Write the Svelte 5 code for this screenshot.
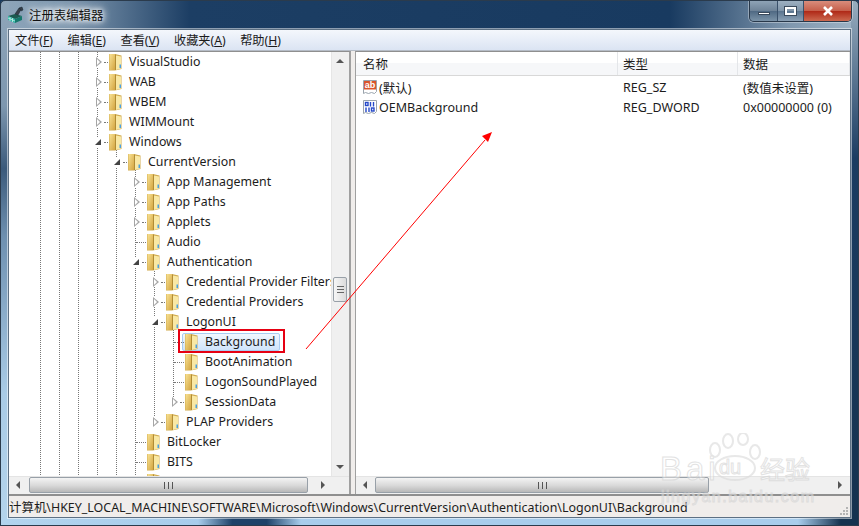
<script>
	const rows = [
		{ d: 4, t: 'VisualStudio', e: 'c' },
		{ d: 4, t: 'WAB', e: 'c' },
		{ d: 4, t: 'WBEM', e: 'c' },
		{ d: 4, t: 'WIMMount', e: 'c' },
		{ d: 4, t: 'Windows', e: 'o' },
		{ d: 5, t: 'CurrentVersion', e: 'o' },
		{ d: 6, t: 'App Management', e: 'c' },
		{ d: 6, t: 'App Paths', e: 'c' },
		{ d: 6, t: 'Applets', e: 'c' },
		{ d: 6, t: 'Audio', e: '' },
		{ d: 6, t: 'Authentication', e: 'o' },
		{ d: 7, t: 'Credential Provider Filters', e: 'c' },
		{ d: 7, t: 'Credential Providers', e: 'c' },
		{ d: 7, t: 'LogonUI', e: 'o' },
		{ d: 8, t: 'Background', e: '', sel: true },
		{ d: 8, t: 'BootAnimation', e: '' },
		{ d: 8, t: 'LogonSoundPlayed', e: '' },
		{ d: 8, t: 'SessionData', e: 'c' },
		{ d: 7, t: 'PLAP Providers', e: 'c' },
		{ d: 6, t: 'BitLocker', e: '' },
		{ d: 6, t: 'BITS', e: '' },
		{ d: 6, t: 'BrowserEmulation', e: 'c' }
	];
	// linhas pontilhadas da arvore: x relativo ao painel, de/ate em px
	const guides = [
		{ x: 31, top: 0, h: 425 },
		{ x: 50, top: 0, h: 425 },
		{ x: 69, top: 0, h: 425 },
		{ x: 88, top: 0, h: 425 },
		{ x: 107, top: 97, h: 328 },
		{ x: 126, top: 117, h: 308 },
		{ x: 145, top: 217, h: 153 },
		{ x: 164, top: 277, h: 74 }
	];
</script>

<svg class="defs" width="0" height="0" aria-hidden="true">
	<defs>
		<linearGradient id="fb" x1="0" x2="1" y1="0" y2="1">
			<stop offset="0" stop-color="#f8e294" />
			<stop offset="1" stop-color="#d4a540" />
		</linearGradient>
		<symbol id="fld" viewBox="0 0 13 18">
			<path d="M0 1h6l6.500 1.500V16L6 17.500H0z" fill="#d2ac50" />
			<path d="M0.500 1h5.500v16H0.500z" fill="url(#fb)" />
			<path d="M7 2.500l5 1v12l-5 1.500z" fill="#f9e8a4" />
			<path d="M6.500 1.500v15.500" stroke="#a8842f" stroke-width=".8" />
			<path d="M10.500 11.500h1.500v3.500h-1.500z" fill="#4aa0e0" />
		</symbol>
	</defs>
</svg>

<div class="window">
	<header class="titlebar">
		<svg class="appicon" width="16" height="18" viewBox="0 0 16 18">
			<path d="M0 10l7-2 7 2-7 3z" fill="#1b5a50" />
			<path d="M0 10l7 3v4l-7-3z" fill="#2fb7a6" />
			<path d="M7 13l7-3v4l-7 3z" fill="#15786c" />
			<path d="M2 11l0 4M4.500 12v4M0 12l7 3" stroke="#d8f4ee" stroke-width=".7" fill="none" />
			<path d="M7 8l4-6 2 1.500-3 5.500zM11 2l3-1 1 3-2 1" fill="#39404a" stroke="#12202a" stroke-width=".5" />
		</svg>
		<span class="title">注册表编辑器</span>
		<div class="caption">
			<button class="cbtn min" aria-label="最小化"><i></i></button>
			<button class="cbtn max" aria-label="最大化"><i></i></button>
			<button class="cbtn close" aria-label="关闭">
				<svg width="12" height="10" viewBox="0 0 12 10"><path d="M2 1l8 8M10 1l-8 8" stroke="#fff" stroke-width="2.600" /></svg>
			</button>
		</div>
	</header>

	<div class="client">
		<nav class="menu">
			<span>文件(<u>F</u>)</span>
			<span>编辑(<u>E</u>)</span>
			<span>查看(<u>V</u>)</span>
			<span>收藏夹(<u>A</u>)</span>
			<span>帮助(<u>H</u>)</span>
		</nav>

		<div class="panes">
			<section class="tree">
				<div class="treeview">
					{#each guides as g}
						<i class="guide" style="left:{g.x}px;top:{g.top}px;height:{g.h}px"></i>
					{/each}
					{#each rows as r}
						<div class="row" class:leaf={!r.e} class:selrow={r.sel} style="padding-left:{r.d * 19 + 8}px">
							<span class="exp {r.e}"></span>
							<i class="dots"></i>
							<svg class="folder" width="13" height="18"><use href="#fld" /></svg>
							<span class="label">{r.t}</span>
						</div>
					{/each}
					<div class="vbar">
						<span class="arrow up"></span>
						<span class="thumb v"><i></i></span>
						<span class="arrow down"></span>
					</div>
				</div>
				<div class="hbar">
					<span class="arrow left"></span>
					<span class="track"><span class="thumb h"><i></i></span></span>
					<span class="arrow right"></span>
				</div>
				<div class="redbox"></div>
			</section>

			<section class="list">
				<div class="listview">
					<div class="head">
						<span>名称</span>
						<span>类型</span>
						<span>数据</span>
					</div>
					<div class="item">
						<span class="c1">
							<svg class="regicon" width="16" height="16" viewBox="0 0 16 16">
								<path d="M1.500 1.500h13v11l-2 2-3-1-3 1-3-1-2 1z" fill="#fff" stroke="#9aa4ad" />
								<rect x="2" y="2" width="12" height="8.500" fill="#d9542c" />
								<text x="8" y="9" class="ab">ab</text>
							</svg>
							(默认)
						</span>
						<span class="c2">REG_SZ</span>
						<span class="c3">(数值未设置)</span>
					</div>
					<div class="item">
						<span class="c1">
							<svg class="regicon" width="16" height="16" viewBox="0 0 16 16">
								<path d="M1.500 1.500h13v11l-2 2-3-1-3 1-3-1-2 1z" fill="#fff" stroke="#9aa4ad" />
								<g fill="none" stroke="#2448c8" stroke-width="1.400">
									<rect x="3.500" y="3.500" width="2.500" height="3" />
									<path d="M8.500 3v4.500M11.500 3v4.500M4 8.500v4.500M7 8.500v4.500" />
									<rect x="9.500" y="9" width="2.500" height="3" />
								</g>
							</svg>
							OEMBackground
						</span>
						<span class="c2">REG_DWORD</span>
						<span class="c3">0x00000000 (0)</span>
					</div>
				</div>
				<div class="hbar">
					<span class="arrow left"></span>
					<span class="track"><span class="thumb h"><i></i></span></span>
					<span class="arrow right"></span>
				</div>
			</section>
		</div>

		<footer class="status">
			计算机\HKEY_LOCAL_MACHINE\SOFTWARE\Microsoft\Windows\CurrentVersion\Authentication\LogonUI\Background
			<svg class="grip" width="10" height="10" viewBox="0 0 10 10">
				<path d="M7 1h2v2H7zM4 4h2v2H4zM7 4h2v2H7zM1 7h2v2H1zM4 7h2v2H4zM7 7h2v2H7z" fill="#b4b4b4" />
			</svg>
		</footer>
	</div>

	<svg class="annot" width="859" height="526" viewBox="0 0 859 526">
		<path d="M306 349L485 140" stroke="#f00" stroke-width="1" fill="none" />
		<path d="M492 132l-10 4 6 6z" fill="#f00" />
	</svg>

	<div class="mark">
		<svg width="76" height="60" viewBox="0 0 76 60">
			<g fill="none" stroke="#dcdcdc" stroke-width="2">
				<ellipse cx="38" cy="35" rx="20" ry="12" />
				<ellipse cx="18" cy="17" rx="5" ry="7" />
				<ellipse cx="31" cy="8" rx="5" ry="7" />
				<ellipse cx="46" cy="6" rx="5" ry="6" />
				<ellipse cx="58" cy="19" rx="5" ry="7" />
			</g>
		</svg>
		<span class="mk-ba">Bai</span><span class="mk-du">du</span><span class="mk-cn">经验</span>
		<span class="mk-url">jingyan.baidu.com</span>
	</div>
</div>

<style>
	:global(body) {
		margin: 0;
		background: #1a3a5e;
	}
	.defs {
		position: absolute;
	}
	.window {
		position: relative;
		width: 859px;
		height: 526px;
		overflow: hidden;
		box-sizing: border-box;
		border: 1px solid #2b3b4c;
		border-radius: 5px 5px 0 0;
		padding: 0 7px 7px;
		display: flex;
		flex-direction: column;
		font-family: 'Noto Sans', 'Noto Sans CJK SC', sans-serif;
		font-size: 12.500px;
		color: #1c1c1c;
		background:
			linear-gradient(90deg, #b2d4ee 0, #a8cdec 23%, #1d4168 27%, #1d4168 31%, #a8cdec 35%, #a8cdec 93%, #15324f 98%) 0 100% / 100% 7px no-repeat,
			linear-gradient(180deg, #90a6ba 0, #7d97af 20%, #3b5a7b 32%, #6e90b0 45%, #a9cbe6 75%, #b4d4ec 100%) 0 0 / 8px 100% no-repeat,
			linear-gradient(180deg, #98adbf 0, #1b3c62 30%, #15324f 100%) 100% 0 / 7px 100% no-repeat,
			linear-gradient(90deg, #8ea5ba 0, #7f98af 8%, #1c3e64 22%, #183a60 78%, #7f97ae 92%, #9fb4c6 100%);
	}
	.titlebar {
		height: 28px;
		flex: none;
		display: flex;
		align-items: center;
		position: relative;
	}
	.appicon {
		margin: 0 5px 0 0;
	}
	.title {
		font-size: 12.400px;
		color: #111;
		text-shadow: 0 0 8px #fff, 0 0 8px #fff, 0 0 4px #fff;
	}
	.caption {
		position: absolute;
		right: -1px;
		top: 0;
		display: flex;
		height: 20px;
		border: 1px solid #28384a;
		border-top: none;
		border-radius: 0 0 5px 5px;
		overflow: hidden;
		box-shadow: 0 0 0 1px rgba(255, 255, 255, 0.35);
	}
	.cbtn {
		padding: 0;
		border: none;
		display: flex;
		align-items: center;
		justify-content: center;
		border-right: 1px solid #39506a;
	}
	.cbtn.min {
		width: 28px;
		background: linear-gradient(#8ea3b6, #6d8297 50%, #506a84 52%, #7b93a8);
	}
	.cbtn.min i {
		display: block;
		width: 10px;
		height: 1px;
		margin-top: 5px;
		background: #fff;
		border: 1px solid #3a4a5c;
	}
	.cbtn.max {
		width: 26px;
		background: linear-gradient(#9db0c1, #7f94a8 50%, #5c7690 52%, #8ba0b4);
	}
	.cbtn.max i {
		display: block;
		width: 7px;
		height: 4px;
		border: 2px solid #fff;
		outline: 1px solid #3a4a5c;
	}
	.cbtn.close {
		width: 47px;
		border-right: none;
		background: linear-gradient(#d98d7c, #c6604c 48%, #b02a18 52%, #cc6a50);
	}
	.client {
		flex: 1;
		min-height: 0;
		display: flex;
		flex-direction: column;
		background: #f0edeb;
		border: 1px solid #5d7083;
		box-shadow: 0 0 0 1px rgba(255, 255, 255, 0.5);
	}
	.menu {
		height: 20px;
		flex: none;
		display: flex;
		align-items: center;
		gap: 14.500px;
		padding-left: 6px;
		font-size: 12.200px;
		background: linear-gradient(#f4f7fc, #dbe4f3);
		border-bottom: 1px solid #b5bcc6;
	}
	.menu u {
		text-underline-offset: 1px;
	}
	.panes {
		flex: 1;
		min-height: 0;
		display: flex;
		gap: 4px;
		background: #f0edeb;
		border-bottom: 2px solid #8f8f8f;
	}
	.tree {
		width: 342px;
		flex: none;
		position: relative;
		display: flex;
		flex-direction: column;
		background: #fff;
		border-top: 1px solid #8f8f8f;
		border-right: 2px solid #a0a0a0;
		box-sizing: border-box;
	}
	.treeview {
		flex: 1;
		min-height: 0;
		overflow: hidden;
		position: relative;
		font-size: 12.350px;
	}
	.guide {
		position: absolute;
		width: 0;
		border-left: 1px dotted #777;
	}
	.row {
		position: relative;
		height: 20px;
		display: flex;
		align-items: center;
		white-space: nowrap;
		z-index: 1;
	}
	.exp {
		width: 9px;
		height: 10px;
		flex: none;
		position: relative;
		background: #fff;
	}
	.exp.c::before {
		content: '';
		position: absolute;
		left: 3px;
		top: 0;
		border-left: 6px solid #a5a5a5;
		border-top: 5px solid transparent;
		border-bottom: 5px solid transparent;
	}
	.exp.c::after {
		content: '';
		position: absolute;
		left: 4px;
		top: 2px;
		border-left: 3px solid #fff;
		border-top: 3px solid transparent;
		border-bottom: 3px solid transparent;
	}
	.exp.o::before {
		content: '';
		position: absolute;
		left: 2px;
		top: 2px;
		border-right: 6px solid #444;
		border-top: 6px solid transparent;
	}
	.dots {
		width: 4px;
		margin: 0 1px 0 2px;
		border-top: 1px dotted #777;
		flex: none;
	}
	.leaf .exp {
		width: 5px;
		background: none;
	}
	.leaf .dots {
		width: 10px;
		margin: 0 1px 0 0;
	}
	.folder {
		flex: none;
	}
	.label {
		margin-left: 4px;
		padding: 1px 2px;
		line-height: 16px;
		border: 1px solid transparent;
	}
	.selrow::before {
		content: '';
		position: absolute;
		left: 173px;
		top: 1px;
		width: 96px;
		height: 16px;
		z-index: -1;
		border: 1px solid #a9cdf2;
		border-radius: 2px;
		background: linear-gradient(#f1f7fe, #cfe4fb);
	}
	.redbox {
		position: absolute;
		left: 169px;
		top: 277px;
		width: 103px;
		height: 20px;
		border: 2px solid #e60012;
		z-index: 3;
	}
	.vbar {
		position: absolute;
		right: 0;
		top: 0;
		bottom: 0;
		width: 17px;
		background: #f0f0f0;
		border-left: 1px solid #e6e6e6;
		z-index: 2;
	}
	.thumb.v {
		position: absolute;
		left: 1px;
		top: 225px;
		width: 12px;
		height: 23px;
		border: 1px solid #98a0a8;
		border-radius: 2px;
		background: linear-gradient(90deg, #f6f6f6, #dcdcdc);
		display: flex;
		align-items: center;
		justify-content: center;
	}
	.thumb.v i {
		width: 7px;
		height: 5px;
		border-top: 1px solid #666;
		border-bottom: 1px solid #666;
		background: linear-gradient(transparent 2px, #666 2px, #666 3px, transparent 3px);
	}
	.arrow {
		position: absolute;
		width: 0;
		height: 0;
	}
	.arrow.up {
		top: 7px;
		left: 4px;
		border-left: 4px solid transparent;
		border-right: 4px solid transparent;
		border-bottom: 4px solid #555;
	}
	.arrow.down {
		bottom: 7px;
		left: 4px;
		border-left: 4px solid transparent;
		border-right: 4px solid transparent;
		border-top: 4px solid #555;
	}
	.hbar {
		position: relative;
		height: 17px;
		flex: none;
		background: #f0f0f0;
		z-index: 2;
		border-top: 1px solid #e4e4e4;
	}
	.hbar .arrow.left {
		left: 7px;
		top: 4px;
		border-top: 4px solid transparent;
		border-bottom: 4px solid transparent;
		border-right: 4px solid #555;
	}
	.hbar .arrow.right {
		right: 8px;
		top: 4px;
		border-top: 4px solid transparent;
		border-bottom: 4px solid transparent;
		border-left: 4px solid #555;
	}
	.tree .hbar .arrow.right {
		right: 24px;
	}
	.track {
		position: absolute;
		top: 0;
		bottom: 0;
		left: 20px;
	}
	.list .track {
		left: 19px;
	}
	.thumb.h {
		display: flex;
		align-items: center;
		justify-content: center;
		box-sizing: border-box;
		height: 16px;
		border: 1px solid #98a0a8;
		border-radius: 2px;
		background: linear-gradient(#f4f4f4, #d8d8d8 55%, #b8b8b8);
	}
	.tree .thumb.h {
		width: 279px;
	}
	.list .thumb.h {
		width: 334px;
	}
	.thumb.h i {
		width: 7px;
		height: 7px;
		border-left: 1px solid #555;
		border-right: 1px solid #555;
		background: linear-gradient(90deg, transparent 3px, #555 3px, #555 4px, transparent 4px);
	}
	.list {
		flex: 1;
		min-width: 0;
		display: flex;
		flex-direction: column;
		background: #fff;
		border-top: 1px solid #8f8f8f;
		border-left: 1px solid #a0a0a0;
		box-sizing: border-box;
	}
	.listview {
		flex: 1;
		min-height: 0;
	}
	.head {
		height: 23px;
		display: grid;
		grid-template-columns: 262px 120px 1fr;
		align-items: center;
		background: linear-gradient(#fff 50%, #f6f7f9 50%);
		border-bottom: 1px solid #d8d8d8;
		margin-bottom: 1px;
	}
	.head span {
		height: 100%;
		display: flex;
		align-items: center;
		padding-left: 5px;
		border-right: 1px solid #e4e6e9;
	}
	.head span:first-child {
		padding-left: 7px;
	}
	.item {
		height: 20px;
		padding-left: 6px;
		display: grid;
		grid-template-columns: 255px 120px 1fr;
		align-items: center;
	}
	.item .c1 {
		display: flex;
		align-items: center;
		gap: 1px;
	}
	.item .c2,
	.item .c3 {
		padding-left: 6px;
	}
	.regicon {
		flex: none;
	}
	.ab {
		font-family: 'Liberation Sans', sans-serif;
		font-size: 9px;
		font-weight: 700;
		fill: #fff;
		text-anchor: middle;
	}
	.status {
		position: relative;
		height: 21px;
		flex: none;
		display: flex;
		align-items: center;
		padding-left: 0;
		font-size: 12.450px;
		white-space: nowrap;
		overflow: hidden;
		background: #f0edeb;
	}
	.grip {
		position: absolute;
		right: 1px;
		bottom: 1px;
	}
	.annot {
		position: absolute;
		left: -1px;
		top: -1px;
		z-index: 5;
		pointer-events: none;
	}
	.mark {
		position: absolute;
		left: 658px;
		top: 432px;
		width: 170px;
		height: 90px;
		z-index: 6;
		pointer-events: none;
		font-family: 'Liberation Sans', sans-serif;
		opacity: 0.65;
	}
	.mark svg {
		position: absolute;
		left: 38px;
		top: 0;
	}
	.mk-ba,
	.mk-du,
	.mk-cn,
	.mk-url {
		position: absolute;
		-webkit-text-stroke: 1px #d4d4d4;
		color: rgba(255, 255, 255, 0.7);
		white-space: nowrap;
	}
	.mk-ba {
		left: 1px;
		top: 17px;
		font-size: 33px;
		letter-spacing: 4px;
	}
	.mk-du {
		left: 60px;
		top: 23px;
		font-size: 20px;
	}
	.mk-cn {
		left: 101px;
		top: 19px;
		font-size: 25px;
		font-family: 'Noto Sans CJK SC', sans-serif;
		line-height: 32px;
	}
	.mk-url {
		left: 2px;
		top: 55px;
		font-size: 16px;
		letter-spacing: 1.500px;
	}
</style>
